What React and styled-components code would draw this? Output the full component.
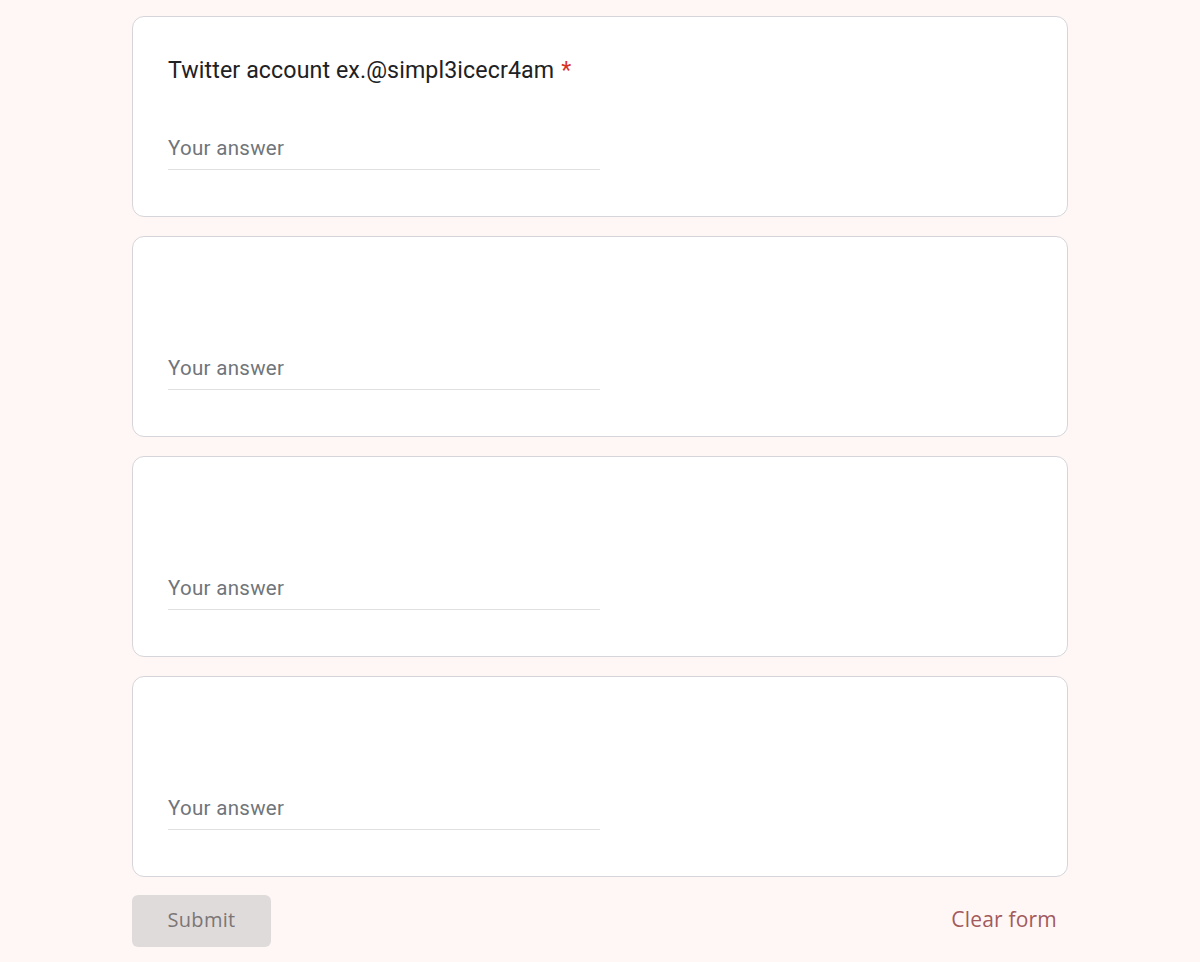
import styled, { createGlobalStyle } from "styled-components";

const GlobalStyle = createGlobalStyle`
  body {
    margin: 0;
    background: #fff7f6;
    font-family: Roboto, "Liberation Sans", Arial, sans-serif;
  }
`;

const questions = [
  { title: "Twitter account ex.@simpl3icecr4am", required: true },
  { title: "" },
  { title: "" },
  { title: "" },
];

const App = () => {
  return (
    <>
      <GlobalStyle />
      <Page>
        <Form>
          {questions.map((q, i) => (
            <Card key={i}>
              <Title>
                {q.title}
                {q.required && <Required>*</Required>}
              </Title>
              <Answer placeholder="Your answer" />
            </Card>
          ))}
          <Footer>
            <SubmitButton type="button">Submit</SubmitButton>
            <ClearButton type="button">Clear form</ClearButton>
          </Footer>
        </Form>
      </Page>
    </>
  );
};

const Page = styled.div`
  display: flex;
  justify-content: center;
  padding: 16px 0 0 0;
  min-height: 946px;
`;

const Form = styled.div`
  width: 936px;
  display: flex;
  flex-direction: column;
  gap: 19px;
`;

const Card = styled.div`
  box-sizing: border-box;
  height: 201px;
  background: #ffffff;
  border: 1px solid #d6d5d9;
  border-radius: 12px;
  padding: 36px 35px 0 35px;
  display: flex;
  flex-direction: column;
`;

const Title = styled.div`
  height: 34px;
  font-size: 23.2px;
  line-height: 34px;
  letter-spacing: 0.1px;
  color: #202124;
`;

const Required = styled.span`
  color: #d93025;
  margin-left: 7px;
`;

const Answer = styled.input`
  margin-top: 45px;
  width: 432px;
  height: 38px;
  box-sizing: border-box;
  border: none;
  border-bottom: 1.5px solid #e0e0e0;
  background: transparent;
  padding: 0 0 6px 0;
  font-family: Roboto, "Liberation Sans", Arial, sans-serif;
  font-size: 20.5px;
  color: #202124;
  outline: none;

  &::placeholder {
    color: #70757a;
    letter-spacing: 0.3px;
  }
`;

const Footer = styled.div`
  display: flex;
  justify-content: space-between;
  align-items: center;
  margin-top: -1px;
`;

const SubmitButton = styled.button`
  width: 139px;
  height: 52px;
  border: none;
  border-radius: 6px;
  background: #e0dbdb;
  color: #7b7676;
  font-family: "Open Sans", Roboto, sans-serif;
  font-size: 20px;
  font-weight: 500;
  letter-spacing: 0.3px;
  padding: 0 0 3px 0;
`;

const ClearButton = styled.button`
  border: none;
  background: transparent;
  color: #a25a5c;
  font-family: "Open Sans", Roboto, sans-serif;
  font-size: 21px;
  font-weight: 500;
  padding: 0 11px 5px 12px;
  letter-spacing: 0.2px;
`;

export default App;
